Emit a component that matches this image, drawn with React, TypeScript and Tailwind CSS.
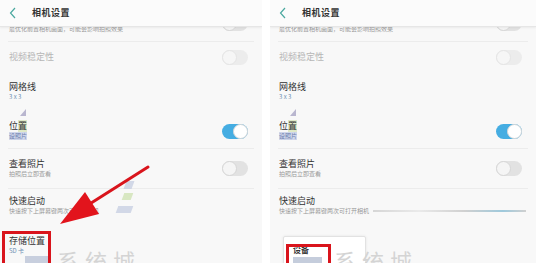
import React from "react";

const FONT = { fontFamily: '"Noto Sans CJK SC", "Noto Sans", sans-serif' };

function Toggle({ on, dim }: { on?: boolean; dim?: boolean }) {
  if (on) {
    return (
      <div className="relative w-[26px] h-[15px] rounded-full bg-[#45ade2]">
        <div className="absolute right-0 top-0 w-[15px] h-[15px] rounded-full bg-white border border-[#d8d8d8]" />
      </div>
    );
  }
  return (
    <div className={`relative w-[26px] h-[15px] rounded-full ${dim ? "bg-[#ececec]" : "bg-[#e2e2e2]"}`}>
      <div className={`absolute left-0 top-0 w-[15px] h-[15px] rounded-full border ${dim ? "bg-[#f6f6f6] border-[#e4e4e4]" : "bg-[#f5f5f5] border-[#d6d6d6]"}`} />
    </div>
  );
}

function Panel({ right }: { right?: boolean }) {
  return (
    <div className={`relative h-[263px] overflow-hidden bg-[#f8f8f8] ${right ? "w-[266px]" : "w-[262px]"}`} style={FONT}>
      {/* header */}
      <div className="relative z-10 h-[27px] bg-[#fbfbfb] border-b border-[#e6e6e6] shadow-[0_1px_2px_rgba(0,0,0,0.06)] flex items-center pl-[9px]">
        <svg width="8" height="12" viewBox="0 0 8 12" className="mr-[15px]">
          <polyline points="6,1 1.5,6 6,11" fill="none" stroke="#4aa89f" strokeWidth="1.2" />
        </svg>
        <span className="text-[9px] font-bold text-[#333] tracking-[0.5px]">相机设置</span>
      </div>
      {/* top cut row */}
      <div className="relative h-[15px] mx-[8px] border-b border-[#ececec] flex justify-between">
        <span className="text-[6px] leading-[6px] mt-[-1px] text-[#9a9a9a] pl-[1px] whitespace-nowrap">最优化前置相机画面，可能会影响拍照效果</span>
        <div className="mt-[-11px] mr-[6px]"><Toggle /></div>
      </div>
      {/* 视频稳定性 */}
      <div className="h-[30px] mx-[8px] flex items-center justify-between">
        <span className="pl-[1px] text-[9px] text-[#b6b6b6]">视频稳定性</span>
        <div className="mr-[6px]"><Toggle dim /></div>
      </div>
      {/* 网格线 */}
      <div className="h-[33px] mx-[8px] pt-[9px] pl-[1px]">
        <div className="text-[9px] leading-[12px] text-[#333]">网格线</div>
        <div className="text-[6px] leading-[8px] text-[#6d8fb2]">3 x 3</div>
      </div>
      {/* 位置 */}
      <div className="relative h-[44px] mx-[8px] border-b border-[#ececec] flex justify-between">
        <div className="pt-[15px] pl-[1px]">
          <div className="text-[9px] leading-[12px] text-[#333] bg-[linear-gradient(90deg,transparent_50%,#dfe9c8_50%)] w-fit">位置</div>
          <div className="text-[6px] leading-[8px] text-[#6d7fb0] bg-[#cfd6ea] w-fit">设照片</div>
        </div>
        <div className="mt-[19px] mr-[6px]"><Toggle on /></div>
        <div className="absolute left-[12px] top-[4px] w-0 h-0 border-l-[6px] border-l-transparent border-b-[7px] border-b-[#b9b6cf]" />
      </div>
      {/* 查看照片 */}
      <div className="h-[40px] mx-[8px] border-b border-[#ececec] flex justify-between">
        <div className="pt-[9px] pl-[1px]">
          <div className="text-[9px] leading-[12px] text-[#333]">查看照片</div>
          <div className="text-[6px] leading-[8px] text-[#999]">拍照后立即查看</div>
        </div>
        <div className="mt-[12px] mr-[6px]"><Toggle /></div>
      </div>
      {/* 快速启动 */}
      <div className="relative h-[37px] mx-[8px] pt-[6px] pl-[1px]">
        <div className="text-[9px] leading-[12px] text-[#333]">快速启动</div>
        <div className="text-[6px] leading-[8px] text-[#999] whitespace-nowrap">快速按下上屏幕键两次可打开相机</div>
        {right && (
          <div className="absolute left-[95px] right-[2px] top-[21px] h-[2px] bg-[linear-gradient(90deg,#d6d6d6,#eaeaea_30%,#d0d0d0_60%,#9ec9dc_85%,#d0d0d0)]" />
        )}
      </div>
      {/* 存储位置 */}
      {!right ? (
        <div className="h-[40px] mx-[8px] pt-[9px] pl-[1px]">
          <div className="text-[9px] leading-[12px] text-[#333]">存储位置</div>
          <div className="text-[6px] leading-[8px] text-[#6d8fb2]">SD 卡</div>
        </div>
      ) : (
        <div className="h-[40px] pl-[13px] pt-[10px]">
          <div className="w-[83px] h-[40px] bg-white border border-[#e2e2e2] rounded-[2px] shadow-[0_0_3px_rgba(0,0,0,0.08)] pl-[9px] pt-[8px]">
            <div className="text-[8px] leading-[10px] font-bold text-[#333]">设备</div>
            <div className="mt-[2px] w-[29px] h-[8px] bg-[#c5cddc]" />
          </div>
        </div>
      )}

      {/* watermark */}
      <div className={`absolute top-[247px] text-[22px] leading-[26px] text-[#d4d4d4] tracking-[6px] whitespace-nowrap ${right ? "left-[64px]" : "left-[57px]"}`}>系统城</div>
      {!right && <div className="absolute left-[25px] top-[256px] w-[25px] h-[8px] bg-[#c8cfde]" />}
      {!right && (
        <>
          <div className="absolute left-[125px] top-[181px] w-[8px] h-[8px] bg-[#c8d0e2] skew-x-[-20deg] opacity-80" />
          <div className="absolute left-[123px] top-[193px] w-[9px] h-[7px] bg-[#cfe2b4] skew-x-[-20deg] opacity-80" />
          <div className="absolute left-[117px] top-[206px] w-[15px] h-[7px] bg-[#c8d0e2] skew-x-[-20deg] opacity-80" />
        </>
      )}

      {/* annotations */}
      {!right ? (
        <>
          <div className="absolute left-[2px] top-[231px] w-[49px] h-[36px] border-[3px] border-[#d9141c]" />
          <svg className="absolute left-0 top-0 z-20" width="262" height="263" viewBox="0 0 262 263">
            <line x1="148" y1="167" x2="88" y2="205" stroke="#d9141c" strokeWidth="3" strokeLinecap="round" />
            <polygon points="60,224 85,192 99,214" fill="#e2141c" />
          </svg>
        </>
      ) : (
        <div className="absolute left-[16px] top-[244px] w-[45px] h-[24px] border-[3px] border-[#d9141c]" />
      )}
    </div>
  );
}

export default function App() {
  return (
    <div className="w-[546px] h-[263px] bg-white flex overflow-hidden">
      <Panel />
      <div className="w-[8px] shrink-0 bg-white" />
      <Panel right />
    </div>
  );
}
